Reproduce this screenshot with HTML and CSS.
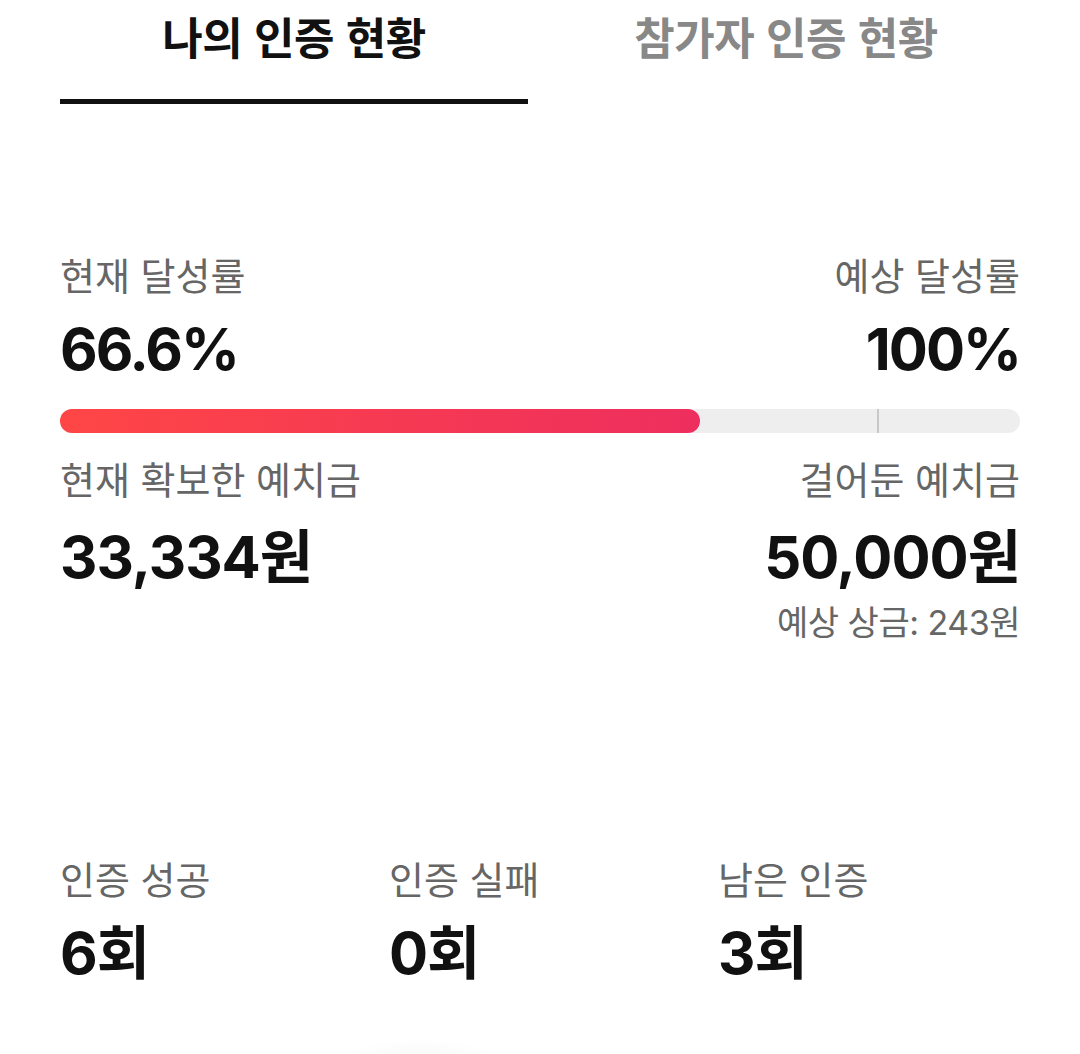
FILE: index.html
```html
<!DOCTYPE html>
<html lang="ko">
<head>
    <meta charset="UTF-8">
    <meta name="viewport" content="width=device-width, initial-scale=1.0">
    <title>인증 현황</title>
    <link rel="stylesheet" href="styles.css">
</head>
<body>

    <!-- Tabs -->
    <nav class="tabs">
        <div class="tab active">나의 인증 현황</div>
        <div class="tab">참가자 인증 현황</div>
    </nav>

    <!-- Achievement -->
    <section class="status">
        <div class="stat-row">
            <div class="stat">
                <p class="label">현재 달성률</p>
                <p class="value">66.6%</p>
            </div>
            <div class="stat right">
                <p class="label">예상 달성률</p>
                <p class="value">100%</p>
            </div>
        </div>

        <div class="progress">
            <div class="progress-fill" style="width: 66.67%"></div>
            <div class="progress-mark" style="left: 85.1%"></div>
        </div>

        <div class="stat-row">
            <div class="stat">
                <p class="label">현재 확보한 예치금</p>
                <p class="value money">33,334원</p>
            </div>
            <div class="stat right">
                <p class="label">걸어둔 예치금</p>
                <p class="value money">50,000원</p>
                <p class="sub">예상 상금: 243원</p>
            </div>
        </div>
    </section>

    <!-- Counts -->
    <section class="counts">
        <div class="stat">
            <p class="label">인증 성공</p>
            <p class="value count">6회</p>
        </div>
        <div class="stat">
            <p class="label">인증 실패</p>
            <p class="value count">0회</p>
        </div>
        <div class="stat">
            <p class="label">남은 인증</p>
            <p class="value count">3회</p>
        </div>
    </section>

    <div class="floating-shadow"></div>

</body>
</html>
```

FILE: styles.css
```css
* {
    margin: 0;
    padding: 0;
    box-sizing: border-box;
}
body {
    font-family: Inter, "Noto Sans CJK KR", sans-serif;
    background-color: #ffffff;
    color: #111111;
    padding: 0 60px;
    position: relative;
    height: 1054px;
    overflow: hidden;
}
.tabs {
    display: grid;
    grid-template-columns: 1fr 1fr;
    gap: 24px;
}
.tab {
    font-family: "Noto Sans CJK KR", sans-serif;
    font-size: 44px;
    font-weight: 700;
    line-height: 52px;
    text-align: center;
    color: #888888;
    height: 104px;
    padding-top: 10px;
    border-bottom: 5px solid transparent;
    letter-spacing: -0.5px;
}
.tab.active {
    color: #111111;
    border-bottom-color: #111111;
}
.status {
    margin-top: 146px;
}
.stat-row {
    display: flex;
    justify-content: space-between;
}
.stat.right {
    text-align: right;
}
.label {
    font-family: "Noto Sans CJK KR", sans-serif;
    font-size: 38px;
    line-height: 48px;
    color: #666666;
}
.value {
    font-size: 58px;
    font-weight: 700;
    line-height: 70px;
    margin-top: 16px;
    letter-spacing: -2px;
}
.value.money {
    margin-top: 20px;
    letter-spacing: -1px;
}
.value.count {
    letter-spacing: -1px;
}
.sub {
    font-size: 34px;
    line-height: 42px;
    color: #666666;
    margin-top: 10px;
    letter-spacing: -0.5px;
}
.progress {
    position: relative;
    height: 24px;
    border-radius: 12px;
    background: #eeeeee;
    margin: 25px 0 21px;
}
.progress-fill {
    height: 100%;
    border-radius: 12px;
    background: linear-gradient(to right, #ff4646, #ee2e5e);
}
.progress-mark {
    position: absolute;
    top: 0;
    width: 2px;
    height: 100%;
    background: #c8c8c8;
}
.counts {
    display: grid;
    grid-template-columns: 329px 329px 1fr;
    margin-top: 210px;
}
.floating-shadow {
    position: absolute;
    left: 330px;
    top: 1038px;
    width: 180px;
    height: 60px;
    border-radius: 50%;
    background: radial-gradient(ellipse at center, rgba(0, 0, 0, 0.04), rgba(0, 0, 0, 0) 70%);
}
```
